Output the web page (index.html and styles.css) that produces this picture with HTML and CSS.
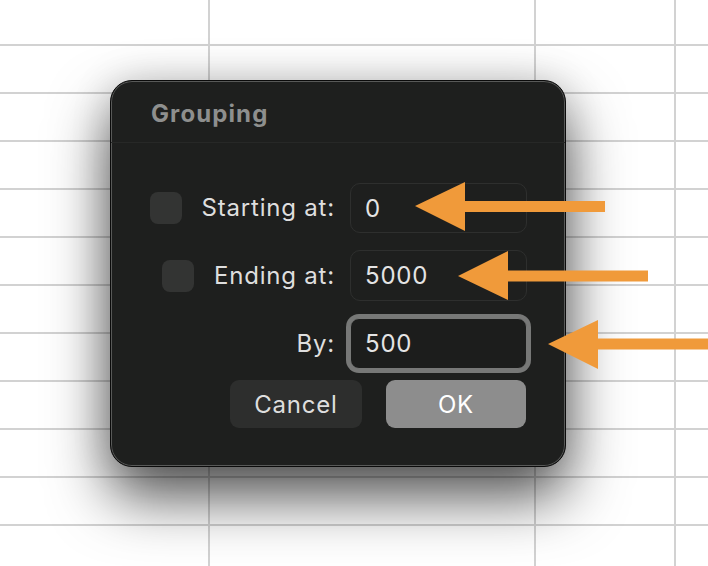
FILE: index.html
```html
<!DOCTYPE html>
<html lang="en">
<head>
<meta charset="utf-8">
<title>Grouping</title>
<link rel="stylesheet" href="styles.css">
</head>
<body>
<div class="sheet">
  <div class="dialog">
    <div class="header"><h1 class="title">Grouping</h1></div>
    <div class="divider"></div>
    <div class="form">
      <div class="label-cell"><span class="checkbox"></span><span class="label">Starting at:</span></div>
      <div class="field">0</div>
      <div class="label-cell"><span class="checkbox"></span><span class="label">Ending at:</span></div>
      <div class="field">5000</div>
      <div class="label-cell"><span class="label">By:</span></div>
      <div class="field focused">500</div>
    </div>
    <div class="buttons">
      <div class="btn cancel">Cancel</div>
      <div class="btn ok">OK</div>
    </div>
  </div>
  <svg class="arrows" width="708" height="566" viewBox="0 0 708 566" xmlns="http://www.w3.org/2000/svg">
    <polygon points="415,206 465,182 465,201 605,201 605,212 465,212 465,231" />
    <polygon points="458,276 508,251 508,270.5 648,270.5 648,281.5 508,281.5 508,300" />
    <polygon points="548,344 598,320 598,338.5 712,338.5 712,349.5 598,349.5 598,369" />
  </svg>
</div>
</body>
</html>
```

FILE: styles.css
```css
* { box-sizing: border-box; }

html, body {
  margin: 0;
  padding: 0;
}

body {
  width: 708px;
  height: 566px;
  overflow: hidden;
  font-family: Inter, "Noto Sans", "Liberation Sans", sans-serif;
}

.sheet {
  position: relative;
  width: 708px;
  height: 566px;
  padding: 80px 0 0 110px;
  background-color: #ffffff;
  background-image:
    linear-gradient(to right, transparent 208px, #d2d2d2 208px, #d2d2d2 210px, transparent 210px),
    linear-gradient(to right, transparent 534px, #d2d2d2 534px, #d2d2d2 536px, transparent 536px),
    linear-gradient(to right, transparent 674px, #d2d2d2 674px, #d2d2d2 676px, transparent 676px),
    repeating-linear-gradient(to bottom, transparent 0, transparent 44px, #d2d2d2 44px, #d2d2d2 46px, transparent 46px, transparent 48px);
}

.dialog {
  width: 456px;
  height: 387px;
  background: #1e1f1e;
  border: 1px solid #0b0b0b;
  border-radius: 22px;
  box-shadow:
    inset 0 0 0 1px #585958,
    0 30px 60px rgba(0, 0, 0, 0.68),
    0 0 40px rgba(0, 0, 0, 0.14);
}

.header {
  height: 61px;
  padding: 0 0 0 40px;
  display: flex;
  align-items: flex-end;
}

.title {
  margin: 0;
  font-size: 24px;
  line-height: 28px;
  font-weight: 700;
  color: #8e8f8e;
  padding-bottom: 14px;
  letter-spacing: 1.1px;
}

.divider {
  height: 1px;
  background: #272827;
}

.form {
  margin-top: 40px;
  display: grid;
  grid-template-columns: 224px 177px;
  grid-template-rows: 50px 51px 51px;
  column-gap: 15px;
  row-gap: 17px;
}

.label-cell {
  display: flex;
  justify-content: flex-end;
  align-items: center;
  gap: 20px;
}

.checkbox {
  width: 32px;
  height: 32px;
  border-radius: 8px;
  background: #333433;
  flex: none;
}

.label {
  font-size: 24px;
  color: #dedede;
  line-height: 30px;
  letter-spacing: 0.8px;
}

.field {
  border: 1px solid #2e2f2e;
  border-radius: 10px;
  padding-left: 14px;
  display: flex;
  align-items: center;
  font-size: 24px;
  color: #e4e4e4;
  letter-spacing: 0.8px;
}

.field.focused {
  border-color: #777877;
  box-shadow: 0 0 0 4px #777877;
  border-radius: 9px;
  background: #1c1d1c;
}

.buttons {
  margin-top: 11px;
  display: flex;
  justify-content: flex-end;
  gap: 24px;
  padding-right: 39px;
}

.btn {
  height: 48px;
  border-radius: 9px;
  display: flex;
  align-items: center;
  justify-content: center;
  font-size: 24px;
  letter-spacing: 0.8px;
}

.cancel {
  width: 132px;
  background: #2d2e2d;
  color: #dedede;
}

.ok {
  width: 140px;
  background: #8d8d8d;
  color: #ffffff;
}

.arrows {
  position: absolute;
  left: 0;
  top: 0;
  fill: #f09a3a;
}
```
